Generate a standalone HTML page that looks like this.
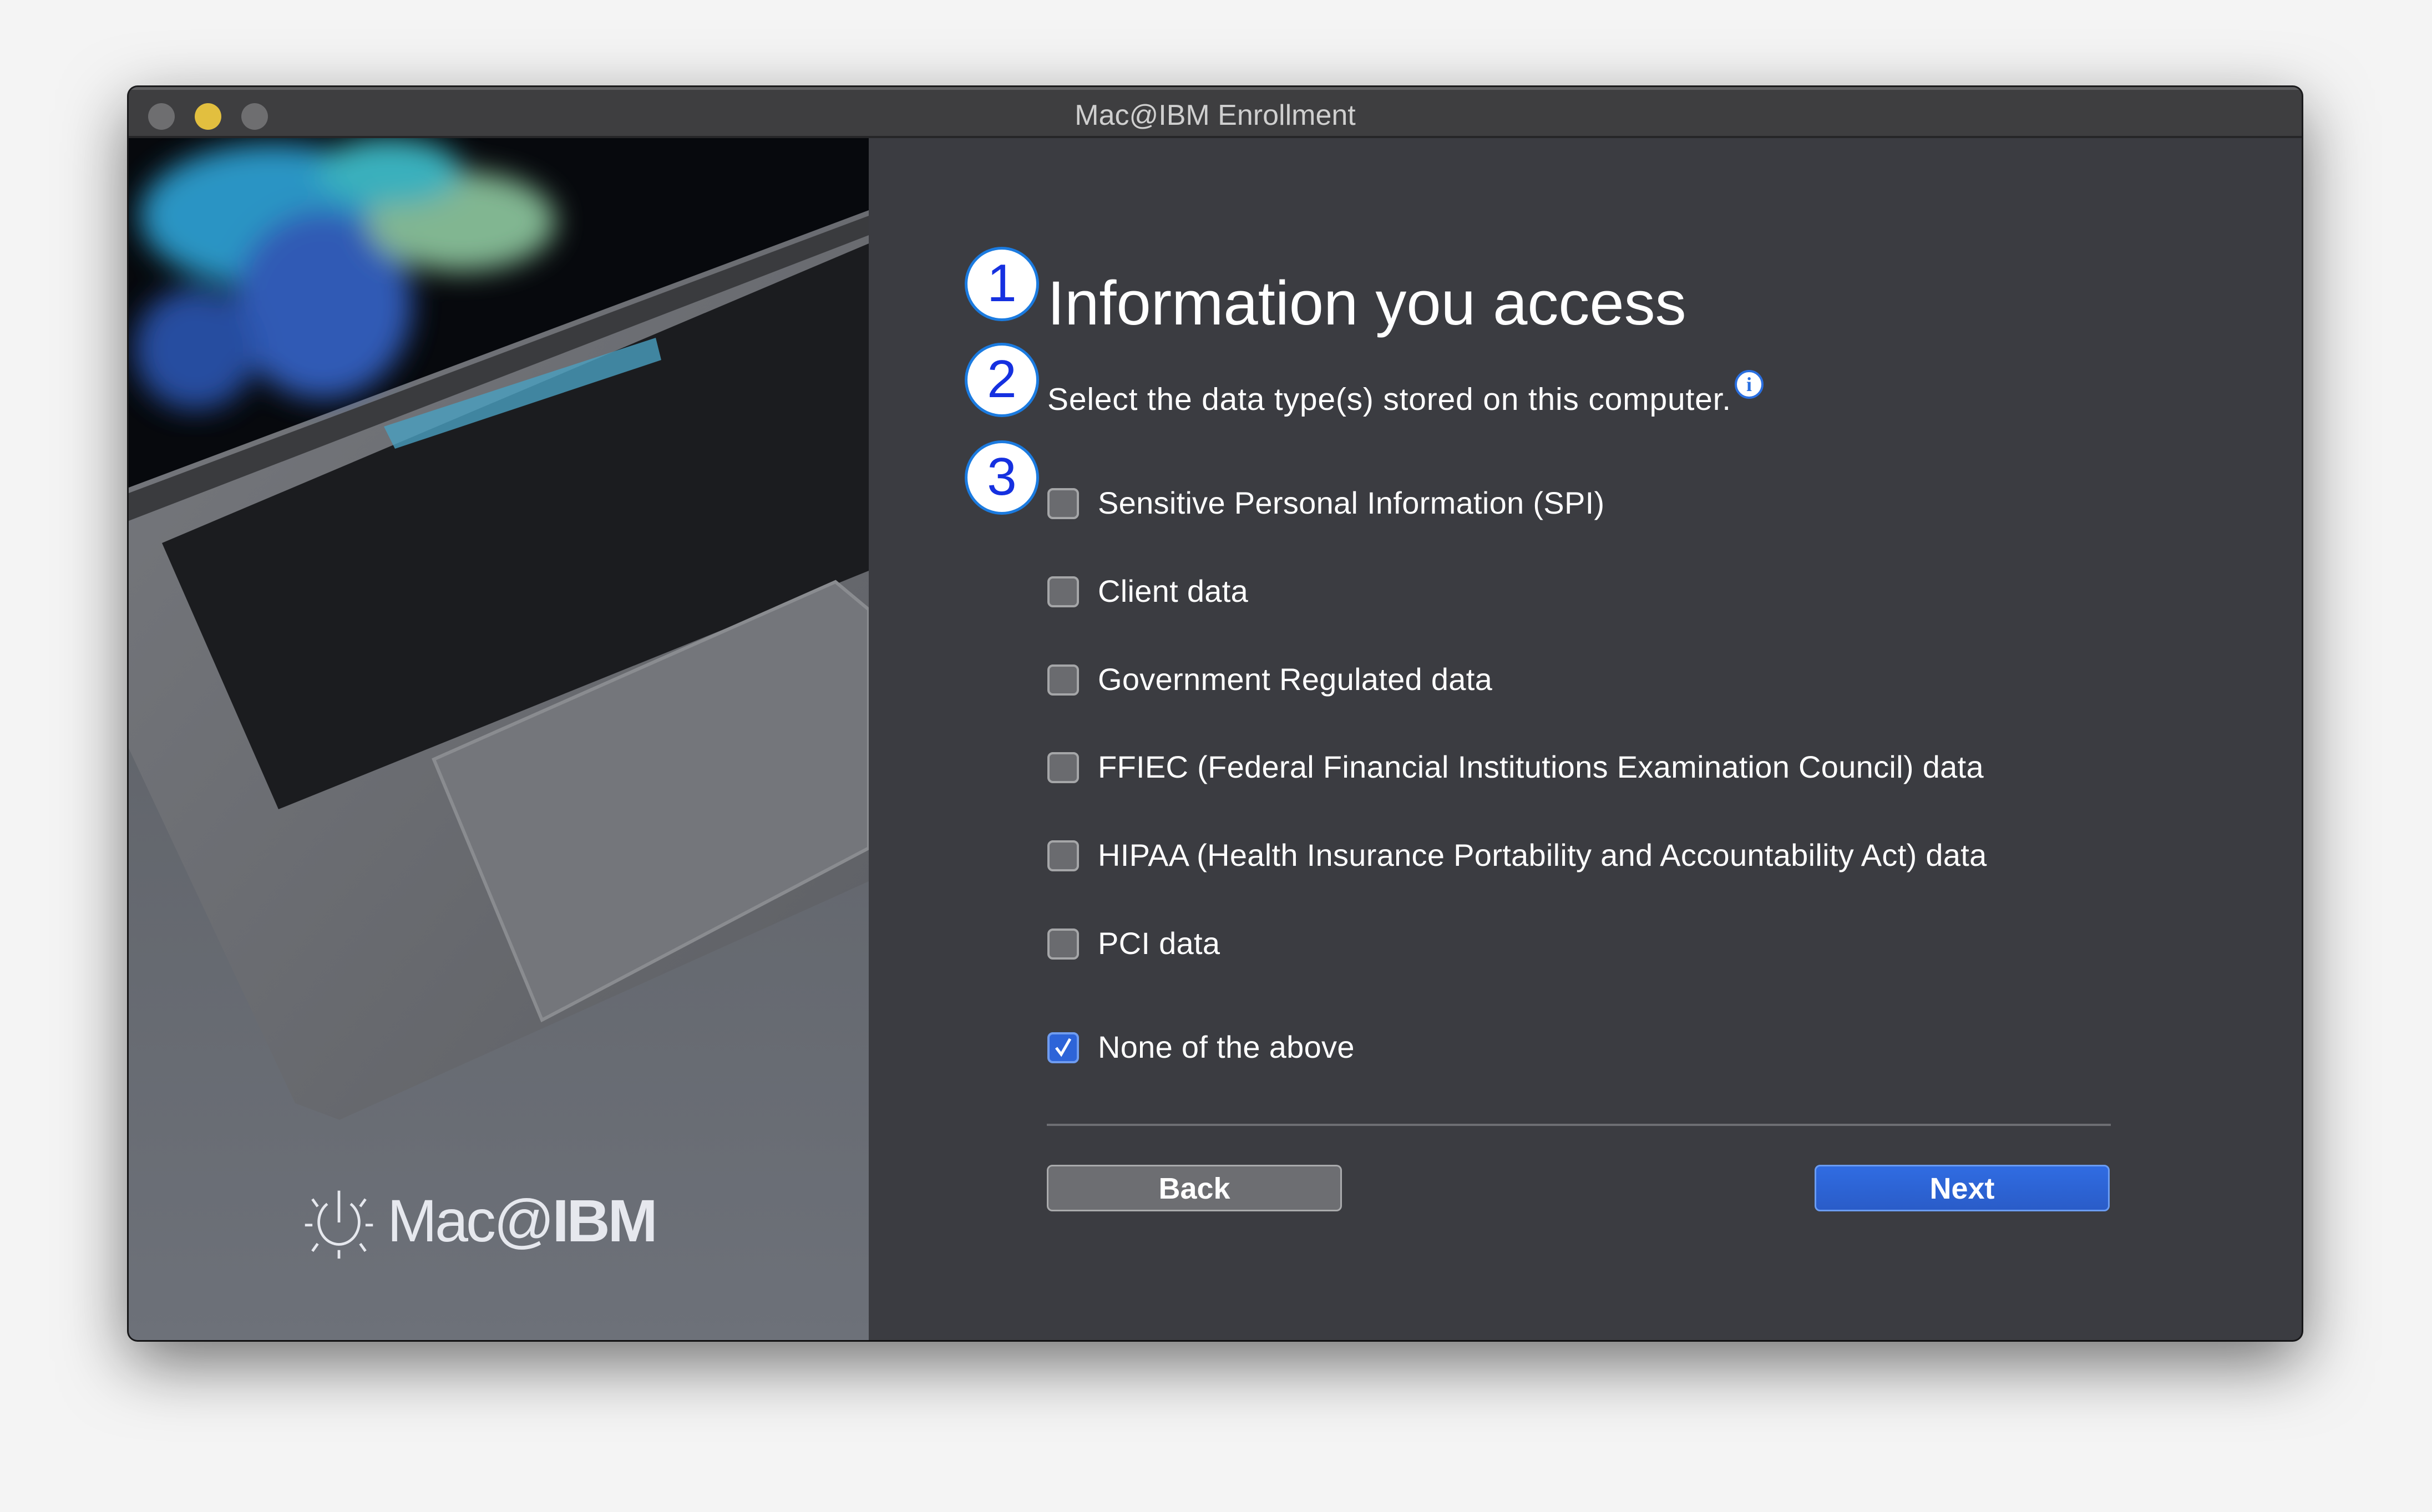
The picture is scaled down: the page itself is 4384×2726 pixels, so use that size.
<!DOCTYPE html>
<html><head><meta charset="utf-8"><style>
*{margin:0;padding:0;box-sizing:border-box}
body{width:4384px;height:2726px;background:#f4f4f4;position:relative;overflow:hidden;font-family:"Liberation Sans",sans-serif}
.win{position:absolute;left:232px;top:157px;width:3917px;height:2259px;border-radius:16px;background:#3b3c41;box-shadow:0 40px 120px rgba(0,0,0,.55),0 0 0 3px #1e1e20;overflow:hidden}
.tb{position:absolute;left:0;top:0;width:100%;height:92px;background:#3e3e40;border-bottom:4px solid #262628;border-top:5px solid #5e5e60}
.dot{position:absolute;top:24px;width:48px;height:48px;border-radius:50%;background:#6e6e70}
.title{position:absolute;left:0;right:0;top:16px;text-align:center;color:#cfcfcf;font-size:52px}
.left{position:absolute;left:0;top:92px;width:1334px;height:2167px;background:linear-gradient(#575a5f,#6d7179)}
.abs{position:absolute;color:#fff;white-space:nowrap}
.circ{position:absolute;width:134px;height:134px;border-radius:50%;background:#fff;border:5px solid #1b7be0;color:#1530e0;font-size:96px;text-align:center;line-height:122px}
.cb{position:absolute;left:1656px;width:57px;height:56px;border-radius:10px;background:#6a6b6f;border:4px solid #a5a6a8}
.lbl{position:absolute;left:1747px;color:#fff;font-size:56px;letter-spacing:.3px}
.btn{position:absolute;top:1943px;width:532px;height:84px;border-radius:10px;color:#fff;font-size:54px;font-weight:bold;text-align:center;line-height:80px}
</style></head><body>
<div class="win">
 <div class="tb">
  <div class="dot" style="left:35px"></div>
  <div class="dot" style="left:119px;background:#e2bf3f"></div>
  <div class="dot" style="left:203px"></div>
  <div class="title">Mac@IBM Enrollment</div>
 </div>
 <div class="left">
  <svg width="1334" height="2167" viewBox="0 0 1334 2167">
   <defs>
    <filter id="bl"><feGaussianBlur stdDeviation="25"/></filter>
    <linearGradient id="al" x1="0" y1="0" x2="1" y2="1"><stop offset="0" stop-color="#77797e"/><stop offset="1" stop-color="#5d5f64"/></linearGradient>
   </defs>
   <polygon points="0,620 1334,110 1334,1340 380,1770 300,1740 0,1100" fill="url(#al)"/>
   <polygon points="0,0 1334,0 1334,130 0,630" fill="#07090d"/>
   <g filter="url(#bl)" opacity=".9">
    <ellipse cx="260" cy="140" rx="240" ry="130" fill="#2fa4d8"/>
    <ellipse cx="350" cy="300" rx="160" ry="170" fill="#3464c8"/>
    <ellipse cx="600" cy="150" rx="170" ry="90" fill="#8fc9a0"/>
    <ellipse cx="120" cy="380" rx="110" ry="110" fill="#2b54b0"/>
    <ellipse cx="470" cy="60" rx="130" ry="60" fill="#40c3d0"/>
   </g>
   <polygon points="0,640 1334,140 1334,175 0,690" fill="#3a3b3e"/>
   <polygon points="60,730 1334,190 1334,780 270,1210" fill="#1b1c1f"/>
   <polygon points="460,520 950,360 960,400 480,560" fill="#4aa0c0" opacity=".8"/>
   <polygon points="550,1120 1274,800 1334,850 1334,1280 745,1590" fill="#74767b" stroke="#8a8c90" stroke-width="6"/>
  </svg>
  <div class="abs" style="left:466px;top:1898px;font-size:108px;line-height:108px;color:#e6e8ee;letter-spacing:-4px">Mac@<b>IBM</b></div>
  <svg style="position:absolute;left:312px;top:1888px" width="134" height="134" viewBox="0 0 140 140" fill="none" stroke="#e6e8ee" stroke-width="5">
   <path d="M48 35 A38 42 0 1 0 92 35"/><path d="M70 10 V70"/><path d="M6 75 H20 M120 75 H134 M70 122 V138 M20 26 L30 40 M120 26 L110 40 M20 124 L30 110 M120 124 L110 110"/>
  </svg>
 </div>
 <div class="circ" style="left:1507px;top:288px">1</div>
 <div class="circ" style="left:1507px;top:461px">2</div>
 <div class="circ" style="left:1507px;top:637px">3</div>
 <div class="abs" style="left:1656px;top:325px;font-size:112px">Information you access</div>
 <div class="abs" style="left:1656px;top:530px;font-size:57px;letter-spacing:.8px">Select the data type(s) stored on this computer.</div>
 <div style="position:absolute;left:2895px;top:510px;width:52px;height:52px;border-radius:50%;background:#fff;border:4px solid #2a6fe0;color:#2a6fe0;font:bold 36px 'Liberation Serif',serif;text-align:center;line-height:44px">i</div>
 <div class="cb" style="top:723px"></div><div class="lbl" style="top:717px">Sensitive Personal Information (SPI)</div>
 <div class="cb" style="top:882px"></div><div class="lbl" style="top:876px">Client data</div>
 <div class="cb" style="top:1041px"></div><div class="lbl" style="top:1035px">Government Regulated data</div>
 <div class="cb" style="top:1199px"></div><div class="lbl" style="top:1193px">FFIEC (Federal Financial Institutions Examination Council) data</div>
 <div class="cb" style="top:1358px"></div><div class="lbl" style="top:1352px">HIPAA (Health Insurance Portability and Accountability Act) data</div>
 <div class="cb" style="top:1517px"></div><div class="lbl" style="top:1511px">PCI data</div>
 <div class="cb" style="top:1704px;background:#2d64d8;border-color:#6f9cf0"><svg width="49" height="48" viewBox="0 0 49 48"><path d="M12 24 L21 36 L37 8" fill="none" stroke="#fff" stroke-width="5"/></svg></div>
 <div class="lbl" style="top:1698px">None of the above</div>
 <div style="position:absolute;left:1655px;top:1869px;width:1918px;height:4px;background:#6d6e72"></div>
 <div class="btn" style="left:1655px;background:#6d6e72;border:3px solid #a9aaac">Back</div>
 <div class="btn" style="left:3039px;background:linear-gradient(#306ce2,#2a5cc8);border:3px solid #6a9cf2">Next</div>
</div>
</body></html>
